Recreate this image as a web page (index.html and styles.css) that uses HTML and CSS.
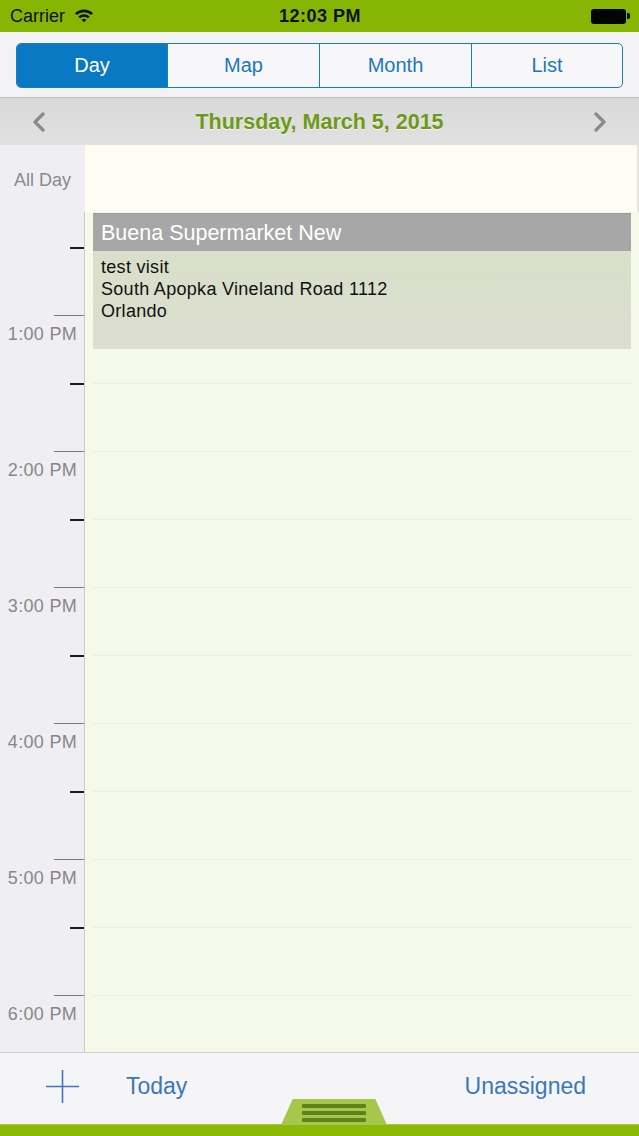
FILE: index.html
```html
<!DOCTYPE html>
<html>
<head>
<meta charset="utf-8">
<link rel="stylesheet" href="styles.css">
</head>
<body>
<div class="screen">
  <div class="status">
    <div class="status-left">
      <span class="carrier">Carrier</span>
      <svg class="wifi" width="20" height="15" viewBox="0 0 20 15">
        <path d="M1 5.2 A13 13 0 0 1 19 5.2 L17.2 7 A10.5 10.5 0 0 0 2.8 7 Z" fill="#111"/>
        <path d="M4.3 8.5 A8.3 8.3 0 0 1 15.7 8.5 L13.9 10.3 A5.8 5.8 0 0 0 6.1 10.3 Z" fill="#111"/>
        <path d="M7.6 11.8 A3.5 3.5 0 0 1 12.4 11.8 L10 14.3 Z" fill="#111"/>
      </svg>
    </div>
    <div class="clock">12:03 PM</div>
    <div class="status-right">
      <div class="battery"><div class="battery-body"></div><div class="battery-cap"></div></div>
    </div>
  </div>

  <div class="nav">
    <div class="segmented">
      <div class="seg seg-active">Day</div>
      <div class="seg">Map</div>
      <div class="seg">Month</div>
      <div class="seg">List</div>
    </div>
  </div>

  <div class="date-bar">
    <svg class="chev" width="14" height="20" viewBox="0 0 14 20"><polyline points="11,2 3,10 11,18" fill="none" stroke="#8a8a8a" stroke-width="3.2" stroke-linejoin="round" stroke-linecap="round"/></svg>
    <div class="date-title">Thursday, March 5, 2015</div>
    <svg class="chev" width="14" height="20" viewBox="0 0 14 20"><polyline points="3,2 11,10 3,18" fill="none" stroke="#8a8a8a" stroke-width="3.2" stroke-linejoin="round" stroke-linecap="round"/></svg>
  </div>

  <div class="allday">
    <div class="allday-label">All Day</div>
    <div class="allday-lane"></div>
  </div>

  <div class="timeline">
    <div class="slot slot-first"><div class="gutter"></div><div class="lane lane-plain"></div></div>
    <div class="slot"><div class="gutter"><div class="tick"></div></div><div class="lane"></div></div>
    <div class="slot"><div class="gutter"><div class="hourline"></div><div class="hour">1:00 PM</div></div><div class="lane"></div></div>
    <div class="slot"><div class="gutter"><div class="tick"></div></div><div class="lane"></div></div>
    <div class="slot"><div class="gutter"><div class="hourline"></div><div class="hour">2:00 PM</div></div><div class="lane"></div></div>
    <div class="slot"><div class="gutter"><div class="tick"></div></div><div class="lane"></div></div>
    <div class="slot"><div class="gutter"><div class="hourline"></div><div class="hour">3:00 PM</div></div><div class="lane"></div></div>
    <div class="slot"><div class="gutter"><div class="tick"></div></div><div class="lane"></div></div>
    <div class="slot"><div class="gutter"><div class="hourline"></div><div class="hour">4:00 PM</div></div><div class="lane"></div></div>
    <div class="slot"><div class="gutter"><div class="tick"></div></div><div class="lane"></div></div>
    <div class="slot"><div class="gutter"><div class="hourline"></div><div class="hour">5:00 PM</div></div><div class="lane"></div></div>
    <div class="slot"><div class="gutter"><div class="tick"></div></div><div class="lane"></div></div>
    <div class="slot"><div class="gutter"><div class="hourline"></div><div class="hour">6:00 PM</div></div><div class="lane"></div></div>

    <div class="event">
      <div class="event-title">Buena Supermarket New</div>
      <div class="event-body">
        <div>test visit</div>
        <div>South Apopka Vineland Road 1112</div>
        <div>Orlando</div>
      </div>
    </div>
  </div>

  <div class="toolbar">
    <svg class="plus" width="33" height="33" viewBox="0 0 33 33">
      <line x1="16.5" y1="0" x2="16.5" y2="33" stroke="#3b78b9" stroke-width="1.6"/>
      <line x1="0" y1="16.5" x2="33" y2="16.5" stroke="#3b78b9" stroke-width="1.6"/>
    </svg>
    <span class="tb-link">Today</span>
    <span class="tb-link tb-right">Unassigned</span>
  </div>
  <div class="bottom-bar"></div>

  <div class="handle">
    <div class="handle-line"></div>
    <div class="handle-line"></div>
    <div class="handle-line"></div>
  </div>
</div>
</body>
</html>
```

FILE: styles.css
```css
* { box-sizing: border-box; }
html, body { margin: 0; padding: 0; }
body {
  font-family: "Liberation Sans", Arial, sans-serif;
  background: #f2f2f4;
}
.screen {
  width: 639px;
  height: 1136px;
  position: relative;
  overflow: hidden;
  display: flex;
  flex-direction: column;
}

/* status bar */
.status {
  height: 32px;
  flex: none;
  background: #86b503;
  display: flex;
  align-items: center;
  padding: 0 9px 0 10px;
  font-size: 18px;
  color: #111;
}
.status-left { flex: 1; display: flex; align-items: center; gap: 9px; }
.wifi { margin-top: -2px; }
.clock { font-weight: bold; font-size: 18px; letter-spacing: 0.5px; }
.status-right { flex: 1; display: flex; justify-content: flex-end; }
.battery { display: flex; align-items: center; }
.battery-body {
  width: 35px; height: 15px; background: #050505; border-radius: 3px;
}
.battery-cap { width: 3px; height: 6px; background: #050505; border-radius: 0 2px 2px 0; margin-left: 1px; }

/* nav segmented */
.nav {
  height: 66px;
  flex: none;
  background: #f3f3f5;
  padding: 11px 16px 0 16px;
  border-bottom: 1px solid #bdbdbd;
}
.segmented {
  height: 45px;
  display: grid;
  grid-template-columns: 150px 152px 152px 1fr;
  border: 1px solid #1b7cc0;
  border-radius: 5px;
  overflow: hidden;
  background: #f7f7f9;
}
.seg {
  display: flex;
  align-items: center;
  justify-content: center;
  color: #1b77bd;
  font-size: 20px;
  border-left: 1px solid #1b7cc0;
}
.seg:first-child { border-left: none; }
.seg-active { background: #0a79c3; color: #fff; }

/* date bar */
.date-bar {
  height: 47px;
  flex: none;
  background: linear-gradient(#d9d9d9, #e1e1e1);
  display: flex;
  align-items: center;
  justify-content: space-between;
  padding: 0 32px 0 32px;
}
.date-title {
  font-weight: bold;
  font-size: 21.5px;
  color: #6c9a17;
  text-shadow: 0 1px 0 rgba(255,255,255,0.7);
  margin-top: 2px;
}

/* all day */
.allday {
  height: 67px;
  flex: none;
  display: flex;
}
.allday-label {
  width: 85px;
  background: #efeff3;
  color: #8a8a8a;
  font-size: 18px;
  padding: 25px 0 0 14px;
}
.allday-lane {
  flex: 1;
  background: #fffcf3;
  border-right: 2px solid #e6e6e0;
}

/* timeline */
.timeline {
  height: 840px;
  flex: none;
  position: relative;
  overflow: hidden;
  background: #f5f9ea;
  display: flex;
  flex-direction: column;
}
.slot {
  height: 68px;
  flex: none;
  display: flex;
}
.slot-first { height: 35px; }
.gutter {
  width: 85px;
  flex: none;
  background: #efeff3;
  border-right: 1px solid #c9c9c9;
  position: relative;
}
.tick {
  width: 14px;
  height: 2px;
  background: #1c1c1c;
  margin-left: 70px;
}
.hourline {
  width: 30px;
  height: 1px;
  background: #7c7c7c;
  margin-left: 54px;
}
.hour {
  color: #888;
  font-size: 18px;
  letter-spacing: 0.3px;
  line-height: 20px;
  text-align: right;
  padding-right: 7px;
  margin-top: 8px;
  white-space: nowrap;
}
.lane {
  flex: 1;
  margin: 0 7px 0 8px;
  border-top: 1px solid #ebefdf;
}
.lane-plain { border-top: none; }

.event {
  position: absolute;
  top: 1px;
  left: 93px;
  width: 538px;
  height: 136px;
  display: flex;
  flex-direction: column;
}
.event-title {
  height: 38px;
  flex: none;
  background: #a7a7a7;
  border-top: 1px solid #9a9a9a;
  color: #fff;
  font-size: 21.5px;
  padding: 7px 0 0 8px;
}
.event-body {
  flex: 1;
  background: linear-gradient(#d9dfca, #dcded0);
  color: #111;
  font-size: 18px;
  letter-spacing: 0.3px;
  line-height: 22px;
  padding: 5px 0 0 8px;
}

/* toolbar */
.toolbar {
  height: 72px;
  flex: none;
  background: #f5f5f7;
  border-top: 1px solid #d2d2d2;
  display: flex;
  align-items: center;
  padding: 0 53px 4px 46px;
}
.plus { flex: none; margin-right: 47px; }
.tb-link {
  color: #3b78b9;
  font-size: 23px;
}
.tb-right { margin-left: auto; }

.bottom-bar {
  height: 12px;
  flex: none;
  background: #8cb905;
  border-top: 1px solid #a5c83a;
}

.handle {
  position: absolute;
  left: 281px;
  top: 1099px;
  width: 106px;
  height: 26px;
  background: #a6c84a;
  clip-path: polygon(11% 0, 89% 0, 100% 100%, 0 100%);
  display: flex;
  flex-direction: column;
  align-items: center;
  gap: 3px;
  padding-top: 5px;
}
.handle-line {
  width: 64px;
  height: 4px;
  background: #5f801a;
  border-radius: 1px;
}
```
